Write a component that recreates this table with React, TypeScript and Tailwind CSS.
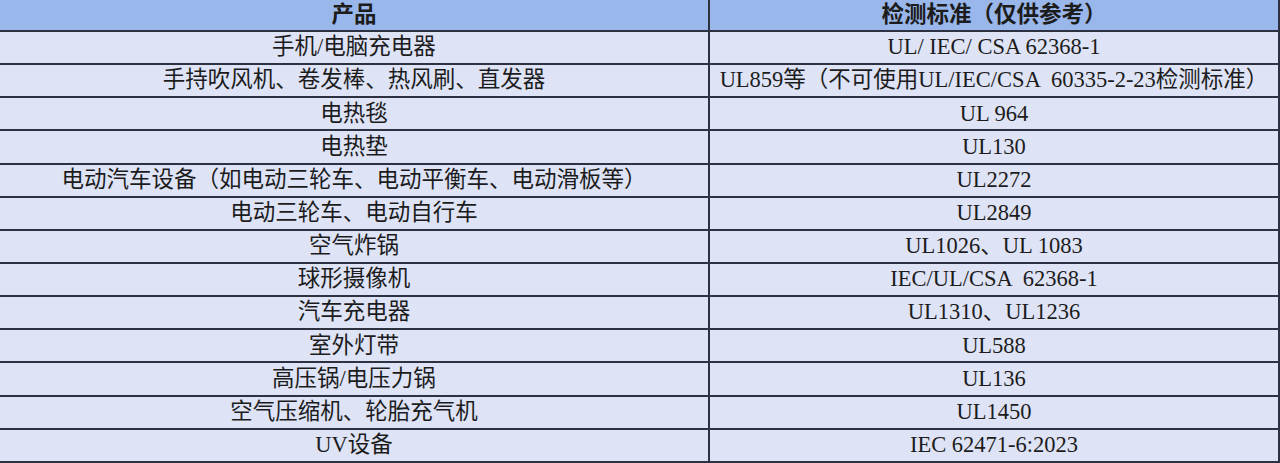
import React from 'react';

const rows: [string, string][] = [
  ['手机/电脑充电器', 'UL/ IEC/ CSA 62368-1'],
  ['手持吹风机、卷发棒、热风刷、直发器', 'UL859等（不可使用UL/IEC/CSA  60335-2-23检测标准）'],
  ['电热毯', 'UL 964'],
  ['电热垫', 'UL130'],
  ['电动汽车设备（如电动三轮车、电动平衡车、电动滑板等）', 'UL2272'],
  ['电动三轮车、电动自行车', 'UL2849'],
  ['空气炸锅', 'UL1026、UL 1083'],
  ['球形摄像机', 'IEC/UL/CSA  62368-1'],
  ['汽车充电器', 'UL1310、UL1236'],
  ['室外灯带', 'UL588'],
  ['高压锅/电压力锅', 'UL136'],
  ['空气压缩机、轮胎充气机', 'UL1450'],
  ['UV设备', 'IEC 62471-6:2023'],
];

const font = "font-['Liberation_Serif','Noto_Sans_CJK_SC',serif]";

export default function App() {
  return (
    <div className={`w-[1280px] h-[463px] bg-white text-[#1c1c1c] text-[22.5px] ${font}`}>
      <div className="w-[1280px] border-r-2 border-[#2e3240]">
        <div className="grid grid-cols-[710px_1fr] h-[32px] bg-[#9ab7eb] border-b-2 border-[#2e3240] font-bold">
          <div className="flex items-center justify-center border-r-2 border-[#2e3240] leading-none">产品</div>
          <div className="flex items-center justify-center leading-none">检测标准（仅供参考）</div>
        </div>
        {rows.map(([product, standard], i) => (
          <div key={i} className="grid grid-cols-[710px_1fr] h-[33.15px] bg-[#dee3f6] border-b-2 border-[#2e3240]">
            <div className="flex items-center justify-center border-r-2 border-[#2e3240] leading-none whitespace-nowrap">{product}</div>
            <div className="flex items-center justify-center leading-none whitespace-pre">{standard}</div>
          </div>
        ))}
      </div>
    </div>
  );
}
